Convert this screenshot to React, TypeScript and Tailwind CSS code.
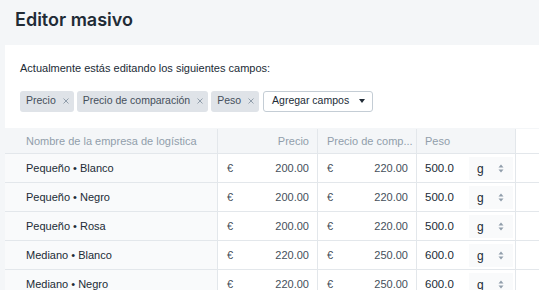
import React from 'react';

// filas de variantes
type Row = {
  name: string;
  price: string;
  compare: string;
  weight: string;
};

const rows: Row[] = [
  { name: 'Pequeño • Blanco', price: '200.00', compare: '220.00', weight: '500.0' },
  { name: 'Pequeño • Negro', price: '200.00', compare: '220.00', weight: '500.0' },
  { name: 'Pequeño • Rosa', price: '200.00', compare: '220.00', weight: '500.0' },
  { name: 'Mediano • Blanco', price: '220.00', compare: '250.00', weight: '600.0' },
  { name: 'Mediano • Negro', price: '220.00', compare: '250.00', weight: '600.0' },
];

const fields = ['Precio', 'Precio de comparación', 'Peso'];

function Tag({ label }: { label: string }) {
  return (
    <span className="flex h-[21px] items-center gap-[7px] rounded-[3px] bg-[#dfe3e8] pl-[6px] pr-[5px] text-[10.5px] text-[#454f5b]">
      {label}
      <svg width="6" height="6" viewBox="0 0 6 6" className="text-[#919eab]">
        <path d="M0.5 0.5l5 5M5.5 0.5l-5 5" stroke="currentColor" strokeWidth="1" />
      </svg>
    </span>
  );
}

function UnitSelect() {
  return (
    <div className="ml-auto mr-[2px] flex h-[23px] w-[44px] items-center justify-between bg-[#f9fafb] pl-[8px] pr-[9px] text-[12px] text-[#212b36]">
      <span className="mt-[1px]">g</span>
      <svg width="6" height="9" viewBox="0 0 6 9" className="text-[#919eab]">
        <path d="M3 0.5L5.5 3.5H0.5Z" fill="currentColor" />
        <path d="M3 8.5L5.5 5.5H0.5Z" fill="currentColor" />
      </svg>
    </div>
  );
}

export default function App() {
  return (
    <div className="h-screen overflow-hidden bg-[#f4f6f8] font-['Liberation_Sans',Arial,sans-serif]">
      <h1 className="flex h-[45px] items-center px-[15px] pb-[6px] font-['Inter',sans-serif] text-[18px] font-semibold text-[#212b36]">
        Editor masivo
      </h1>

      {/* campos en edición */}
      <div className="ml-[5px] h-[83px] bg-white px-[15px] pt-[15px]">
        <p className="text-[11px] text-[#212b36]">Actualmente estás editando los siguientes campos:</p>
        <div className="mt-[14px] flex items-center gap-[3px]">
          {fields.map((f) => (
            <Tag key={f} label={f} />
          ))}
          <button className="ml-[1px] flex h-[21px] items-center gap-[10px] rounded-[3px] border border-[#c4cdd5] bg-white pl-[8px] pr-[7px] text-[10.5px] text-[#212b36]">
            Agregar campos
            <svg width="6" height="4" viewBox="0 0 6 4" className="text-[#212b36]">
              <path d="M0 0h6L3 4Z" fill="currentColor" />
            </svg>
          </button>
        </div>
      </div>

      {/* tabla */}
      <div className="ml-[5px] mt-[1px] text-[11px]">
        <div className="flex h-[25px] border-b border-[#e3e7eb] text-[#919eab]">
          <div className="flex w-[213px] items-center whitespace-nowrap border-r border-[#e3e7eb] pl-[21px]">
            Nombre de la empresa de logística
          </div>
          <div className="flex w-[100px] items-center justify-end border-r border-[#e3e7eb] pr-[8px]">Precio</div>
          <div className="flex w-[99px] items-center whitespace-nowrap border-r border-[#e3e7eb] pl-[9px]">
            Precio de comp...
          </div>
          <div className="flex w-[99px] items-center border-r border-[#e3e7eb] pl-[8px]">Peso</div>
          <div className="flex-1 bg-white" />
        </div>
        {rows.map((r) => (
          <div key={r.name} className="flex h-[29px] border-b border-[#e3e7eb] bg-white">
            <div className="flex w-[213px] items-center border-r border-[#e3e7eb] bg-[#f9fafb] pl-[21px] text-[#212b36]">
              {r.name}
            </div>
            <div className="flex w-[100px] items-center justify-between border-r border-[#e3e7eb] pl-[9px] pr-[8px] text-[#454f5b]">
              <span>€</span>
              <span>{r.price}</span>
            </div>
            <div className="flex w-[99px] items-center justify-between border-r border-[#e3e7eb] pl-[9px] pr-[8px] text-[#454f5b]">
              <span>€</span>
              <span>{r.compare}</span>
            </div>
            <div className="flex w-[99px] items-center border-r border-[#e3e7eb] pl-[8px] text-[11.5px] text-[#212b36]">
              <span className="mt-[1px]">{r.weight}</span>
              <UnitSelect />
            </div>
            <div className="flex-1" />
          </div>
        ))}
      </div>
    </div>
  );
}
